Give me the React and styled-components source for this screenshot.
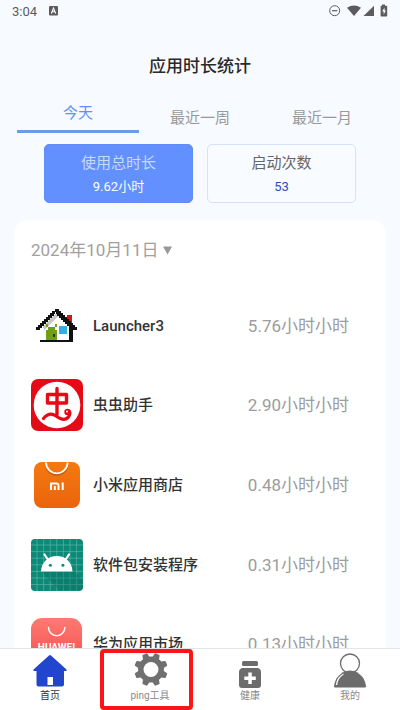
import React, { useState } from "react";
import styled, { createGlobalStyle, css } from "styled-components";

const Global = createGlobalStyle`
  *, *::before, *::after { box-sizing: border-box; }
  body {
    margin: 0;
    background: #f7faff;
    font-family: Roboto, "Noto Sans CJK SC", sans-serif;
    color: #333;
  }
  button, select { font-family: inherit; }
`;

const Screen = styled.div`
  height: 100vh;
  display: flex;
  flex-direction: column;
  overflow: hidden;
`;

const StatusBar = styled.div`
  display: flex;
  align-items: center;
  justify-content: space-between;
  height: 22px;
  padding: 0 12px;
  color: #5c5c5e;
  font-size: 13px;
  flex: none;
`;

const StatusGroup = styled.div`
  display: flex;
  align-items: center;
  gap: ${(p) => p.$gap}px;
`;

const Title = styled.h1`
  margin: 0;
  padding: 32px 0 18px;
  font-size: 17px;
  line-height: 24px;
  font-weight: 500;
  text-align: center;
  color: #2a2a2a;
  flex: none;
`;

const Tabs = styled.div`
  display: grid;
  grid-template-columns: repeat(3, 1fr);
  margin: 0 17px;
  flex: none;
`;

const Tab = styled.button`
  display: flex;
  justify-content: center;
  align-items: flex-start;
  height: 37px;
  padding: 12px 0 0;
  border: 0;
  border-bottom: 3px solid transparent;
  background: none;
  font-size: 15px;
  line-height: 20px;
  color: #999;
  ${(p) =>
    p.$active &&
    css`
      padding-top: 7px;
      color: #6390ee;
      border-bottom-color: #7098ec;
    `}
`;

const Stats = styled.div`
  display: grid;
  grid-template-columns: 1fr 1fr;
  gap: 14px;
  padding: 11px 44px 17px;
  flex: none;
`;

const StatCard = styled.button`
  display: flex;
  flex-direction: column;
  align-items: center;
  height: 59px;
  padding: 7px 0 0;
  border-radius: 5px;
  border: 1px solid ${(p) => (p.$filled ? "#5f8cf5" : "#d5e2f7")};
  background: ${(p) => (p.$filled ? "#6390ff" : "#f8fbff")};
  color: ${(p) => (p.$filled ? "#fff" : "#2f4fc0")};
`;

const StatLabel = styled.span`
  font-size: 15px;
  line-height: 22px;
  color: ${(p) => (p.$filled ? "#c8d8ff" : "#666")};
`;

const StatValue = styled.span`
  font-size: 13px;
  line-height: 26px;
`;

const Panel = styled.main`
  flex: 1;
  min-height: 0;
  overflow: hidden;
  margin: 0 14px;
  padding: 0 17px;
  border-radius: 14px 14px 0 0;
  background: #fff;
`;

const DateField = styled.label`
  display: flex;
  align-items: center;
  gap: 4px;
  padding: 15px 0 21px;
  height: 66px;
  color: #999;
`;

const DateSelect = styled.select`
  appearance: none;
  border: 0;
  margin: 0;
  padding: 0;
  background: none;
  font-size: 17px;
  line-height: 24px;
  color: #a0a0a0;
`;

const AppList = styled.ul`
  display: grid;
  grid-auto-rows: 1fr;
  height: 398px;
  margin: 0;
  padding: 0;
  list-style: none;
`;

const AppRow = styled.li`
  display: flex;
  align-items: center;
  gap: 10px;
  padding-right: 20px;
`;

const AppName = styled.span`
  flex: 1;
  font-size: 15px;
  line-height: 22px;
  font-weight: 500;
  color: #333;
`;

const AppTime = styled.span`
  font-size: 17px;
  line-height: 24px;
  color: #9c9c9c;
`;

const Nav = styled.nav`
  display: grid;
  grid-template-columns: repeat(4, 1fr);
  height: 62px;
  flex: none;
  border-top: 1px solid #e4e5e9;
  background: #fff;
`;

const NavItem = styled.a`
  position: relative;
  display: flex;
  flex-direction: column;
  align-items: center;
  padding-top: 4px;
  font-size: 10px;
  line-height: 14px;
  text-decoration: none;
  color: ${(p) => (p.$active ? "#333" : "#8a8a8a")};
`;

const Highlight = styled.span`
  position: absolute;
  inset: 0 7px 0 0;
  border: 4px solid #fd1414;
  border-radius: 4px;
  pointer-events: none;
`;

const LauncherIcon = () => (
  <svg width="52" height="52" viewBox="0 0 52 52" shapeRendering="crispEdges" aria-hidden="true">
    <path d="M36 15h5v10h-5z" fill="#d01818" />
    <path d="M10 28 25.500 11 41 28v14H10z" fill="#fff" />
    <path d="M12 26 25 13l3 3-15 14z" fill="#c9c9c9" />
    <path d="M15 30h11v11H15zM17 27h7v3h-7zM15 24h2v3h-2zM24 24h2v3h-2z" fill="#6f9f12" />
    <path d="M22 34h2v3h-2z" fill="#26380a" />
    <path d="M28 26h8v8h-8z" fill="#35aee0" />
    <path
      d="M24 9h4v2h2v2h2v2h2v2h2v2h2v2h2v2h2v2h2v2h2v3h-4v12H9V30H5v-3h2v-2h2v-2h2v-2h2v-2h2v-2h2v-2h2v-2h2v-2h3zM25 12v2h-2v2h-2v2h-2v2h-2v2h-2v2h-2v2h-2v2h-2v12h29V26h-2v-2h-2v-2h-2v-2h-2v-2h-2v-2h-2v-2h-2v-2z"
      fill="#111"
      fillRule="evenodd"
    />
  </svg>
);

const WormIcon = () => (
  <svg width="52" height="52" viewBox="0 0 52 52" aria-hidden="true">
    <rect width="52" height="52" rx="7" fill="#e60a16" />
    <circle cx="26" cy="26" r="23.300" fill="#fff" />
    <g fill="none" stroke="#e60a16" strokeWidth="3.400" strokeLinecap="round" strokeLinejoin="round">
      <path d="M16.500 15.500h19v8.500h-19zM26 9.500v26" />
      <path d="M12.500 39.500C17 34 21 34 25 37s8.500 5 12 1.500c2.500-2.500 2.500-6 .5-6.500" strokeWidth="3.200" />
    </g>
    <circle cx="36.500" cy="33" r="3.200" fill="#e60a16" />
    <circle cx="36" cy="32.500" r="1" fill="#fff" />
  </svg>
);

const MiStoreIcon = () => (
  <svg width="52" height="52" viewBox="0 0 52 52" aria-hidden="true">
    <defs>
      <linearGradient id="mi" x1="0" y1="0" x2="0" y2="1">
        <stop offset="0" stopColor="#f5790f" />
        <stop offset="1" stopColor="#ea640c" />
      </linearGradient>
    </defs>
    <rect x="3" y="3" width="46" height="46" rx="8" fill="url(#mi)" />
    <path d="M15 3.500a10.800 10.800 0 0 0 21.600 0" fill="none" stroke="#c4540a" strokeWidth="2" transform="translate(0 1.500)" />
    <path d="M15 3.500a10.800 10.800 0 0 0 21.600 0" fill="none" stroke="#fff" strokeWidth="1.800" />
    <path d="M20 31v-6.500h5.500q2 0 2 2V31M23.800 27v4M31.700 23.500V31" fill="none" stroke="#fff" strokeWidth="2" />
  </svg>
);

const gridLines = [6, 12.6, 19.2, 25.8, 32.4, 39, 45.6];

const InstallerIcon = () => (
  <svg width="52" height="52" viewBox="0 0 52 52" aria-hidden="true">
    <rect width="52" height="52" rx="4" fill="#0b8a78" />
    {gridLines.map((n) => (
      <path key={n} d={`M${n} 0v52M0 ${n}h52`} stroke="#6fbdb1" strokeWidth=".7" opacity=".8" />
    ))}
    <path d="M10 32.500 28 51h22l2-2v-7L39 26z" fill="#056a5c" opacity=".35" />
    <path d="M10 32.500C10.500 23 17 17 25.800 17S41 23 41.500 32.500z" fill="#fff" />
    <path d="m13.500 15.500 4 6M38 15.500l-4 6" stroke="#fff" strokeWidth="2.200" strokeLinecap="round" />
    <circle cx="19.300" cy="26.200" r="1.500" fill="#0b8a78" />
    <circle cx="31.900" cy="26.200" r="1.500" fill="#0b8a78" />
  </svg>
);

const HuaweiIcon = () => (
  <svg width="52" height="52" viewBox="0 0 52 52" aria-hidden="true">
    <defs>
      <linearGradient id="hw" x1="0" y1="0" x2="0" y2="1">
        <stop offset="0" stopColor="#ff7a72" />
        <stop offset="1" stopColor="#f24a4c" />
      </linearGradient>
    </defs>
    <rect width="51" height="52" rx="11" fill="url(#hw)" />
    <path d="M17.500 9.500a8.200 8.200 0 0 0 16.400 0" fill="none" stroke="#fff" strokeWidth="1.400" strokeLinecap="round" />
    <text x="25.500" y="33" fontSize="10" fontWeight="700" fill="#fff" textAnchor="middle">
      HUAWEI
    </text>
  </svg>
);

const HomeIcon = () => (
  <svg width="36" height="36" viewBox="0 0 36 36" aria-hidden="true">
    <path
      d="M17 3.500q1-1 2 0L34.500 17.500v1.500H32v13.500q0 2-2 2H6.500q-2 0-2-2V19H1.500v-1.500zM15.500 25v8h5.500v-8z"
      transform="translate(0 -1)"
      fill="#2145cc"
      fillRule="evenodd"
    />
  </svg>
);

const teeth = [22.5, 67.5, 112.5, 157.5, 202.5, 247.5, 292.5, 337.5];

const GearIcon = () => (
  <svg width="36" height="36" viewBox="0 0 36 36" aria-hidden="true">
    <g transform="translate(1 -1)">
      <circle cx="18" cy="17.500" r="10.200" fill="none" stroke="#707070" strokeWidth="5.500" />
      {teeth.map((a) => (
        <path key={a} d="M14.200 6.500 15.300 1.600q.2-.8 1-.8h3.400q.8 0 1 .8l1.100 4.900z" fill="#707070" transform={`rotate(${a} 18 17.500)`} />
      ))}
    </g>
  </svg>
);

const HealthIcon = () => (
  <svg width="36" height="36" viewBox="0 0 36 36" aria-hidden="true">
    <rect x="10" y="8" width="16" height="5" rx="1.500" fill="#6c6c6c" />
    <path
      d="M10 15h16q3 1 3 4v13q0 3-3 3H10q-3 0-3-3V19q0-3 3-4zM16.300 19.500v4h-4v3.500h4v4h3.500v-4h4v-3.500h-4v-4z"
      fill="#6c6c6c"
      fillRule="evenodd"
    />
  </svg>
);

const PersonIcon = () => (
  <svg width="36" height="36" viewBox="0 0 36 36" aria-hidden="true">
    <path d="M2 33.500q0 1 1 1h30q1 0 1-1C33.500 26 28 18 18 18S2.500 26 2 33.500z" fill="#6c6c6c" />
    <path d="M4.500 32C5 27 8 22.500 13 20.500" fill="none" stroke="#fff" strokeWidth="1.300" />
    <circle cx="18" cy="10.500" r="9.500" fill="#fff" stroke="#6c6c6c" strokeWidth="1.300" />
    <path d="M11.500 19q6.500-3 13 0v3h-13z" fill="#6c6c6c" />
  </svg>
);

const apps = [
  { name: "Launcher3", time: "5.76小时小时", Icon: LauncherIcon },
  { name: "虫虫助手", time: "2.90小时小时", Icon: WormIcon },
  { name: "小米应用商店", time: "0.48小时小时", Icon: MiStoreIcon },
  { name: "软件包安装程序", time: "0.31小时小时", Icon: InstallerIcon },
  { name: "华为应用市场", time: "0.13小时小时", Icon: HuaweiIcon },
];

const navItems = [
  { id: "home", label: "首页", Icon: HomeIcon },
  { id: "ping", label: "ping工具", Icon: GearIcon, marked: true },
  { id: "health", label: "健康", Icon: HealthIcon },
  { id: "mine", label: "我的", Icon: PersonIcon },
];

export default function App() {
  const [tab, setTab] = useState("今天");
  return (
    <Screen>
      <Global />
      <StatusBar>
        <StatusGroup $gap={12}>
          <span>3:04</span>
          <svg width="9" height="10" viewBox="0 0 9 10" aria-hidden="true">
            <rect width="9" height="9.500" rx="1" fill="#5c5c5e" />
            <path d="M2.300 7.500 4.500 2.200l2.200 5.300M3.200 5.800h2.600" fill="none" stroke="#fff" strokeWidth="1.100" />
          </svg>
        </StatusGroup>
        <svg width="60" height="14" viewBox="0 0 60 14" aria-hidden="true">
          <circle cx="6.700" cy="6.700" r="5" fill="none" stroke="#5c5c5e" strokeWidth="1" />
          <path d="M4 6.700h5.400" stroke="#5c5c5e" strokeWidth="1.200" />
          <path d="M19 3.800q7-4.600 14 0L26 12z" fill="#5c5c5e" />
          <path d="M46 1.700V12H35.500z" fill="#5c5c5e" />
          <path d="M54 1.800V.5h3v1.300h1.500q.7 0 .7.700v9.300q0 .7-.7.700h-5.200q-.7 0-.7-.7V2.500q0-.7.700-.7z" fill="#5c5c5e" />
          <path d="m56.500 3.500-2.300 4h1.500v3l2.200-4h-1.400z" fill="#fff" />
        </svg>
      </StatusBar>
      <Title>应用时长统计</Title>
      <Tabs role="tablist">
        {["今天", "最近一周", "最近一月"].map((t) => (
          <Tab key={t} role="tab" aria-selected={tab === t} $active={tab === t} onClick={() => setTab(t)}>
            {t}
          </Tab>
        ))}
      </Tabs>
      <Stats>
        <StatCard $filled>
          <StatLabel $filled>使用总时长</StatLabel>
          <StatValue>9.62小时</StatValue>
        </StatCard>
        <StatCard>
          <StatLabel>启动次数</StatLabel>
          <StatValue>53</StatValue>
        </StatCard>
      </Stats>
      <Panel>
        <DateField>
          <DateSelect aria-label="日期">
            <option>2024年10月11日</option>
          </DateSelect>
          <svg width="9" height="9" viewBox="0 0 9 9" aria-hidden="true">
            <path d="M0 .5h9l-4.500 8z" fill="#999" />
          </svg>
        </DateField>
        <AppList>
          {apps.map(({ name, time, Icon }) => (
            <AppRow key={name}>
              <Icon />
              <AppName>{name}</AppName>
              <AppTime>{time}</AppTime>
            </AppRow>
          ))}
        </AppList>
      </Panel>
      <Nav>
        {navItems.map(({ id, label, Icon, marked }) => (
          <NavItem key={id} href={`#${id}`} $active={id === "home"}>
            <Icon />
            <span>{label}</span>
            {marked && <Highlight />}
          </NavItem>
        ))}
      </Nav>
    </Screen>
  );
}
